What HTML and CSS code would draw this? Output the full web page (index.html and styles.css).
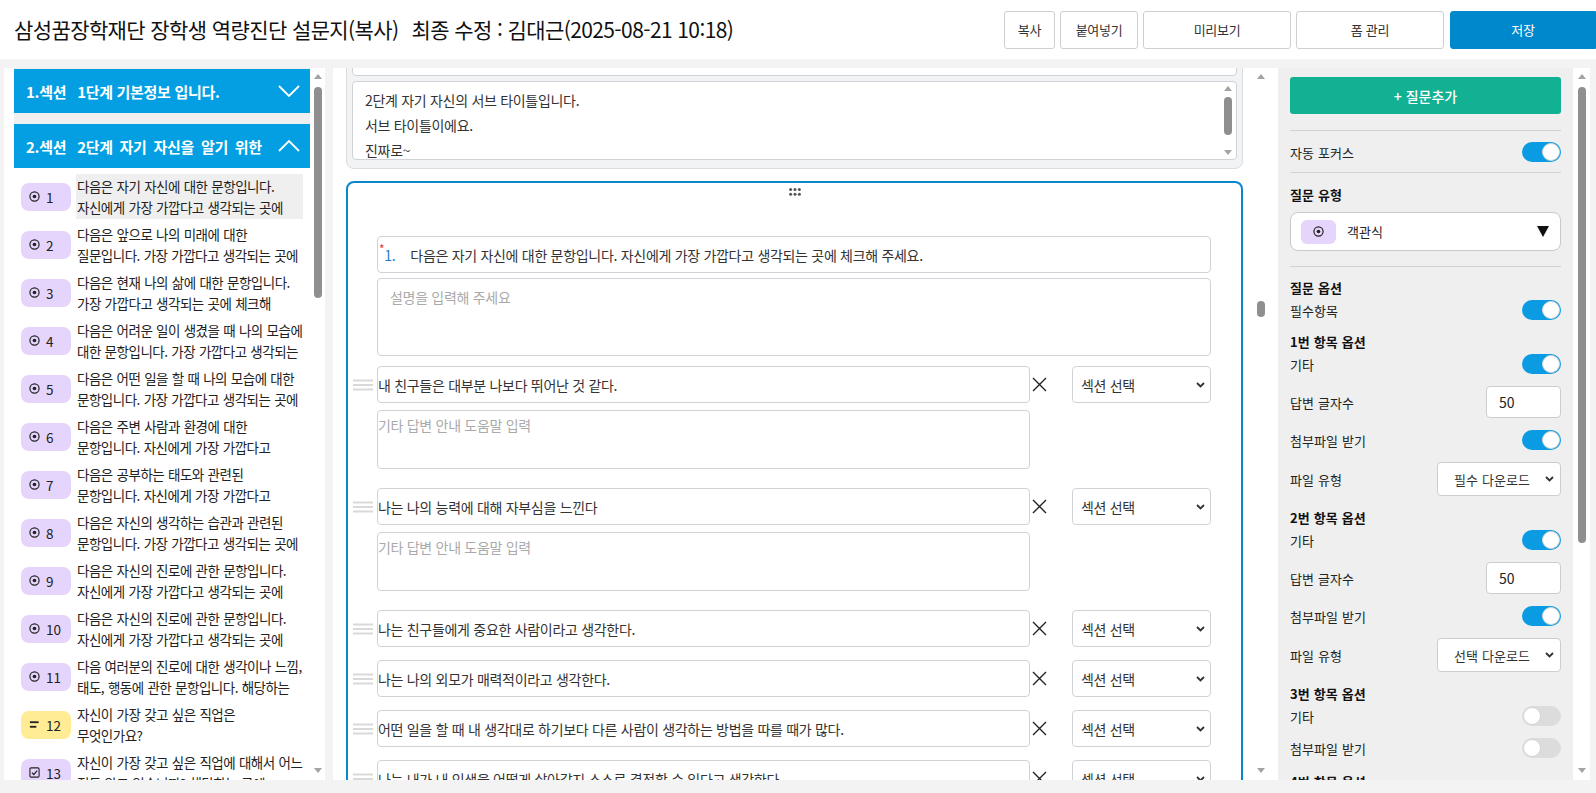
FILE: index.html
```html
<!DOCTYPE html>
<html lang="ko">
<head>
<meta charset="utf-8">
<title>설문지 편집</title>
<link rel="stylesheet" href="styles.css">
</head>
<body>
<header class="topbar">
  <h1 class="doc-title">삼성꿈장학재단 장학생 역량진단 설문지(복사)<span class="modified">최종 수정 : 김대근(2025-08-21 10:18)</span></h1>
  <div class="top-actions">
    <button class="btn btn-sm">복사</button>
    <button class="btn btn-md">붙여넣기</button>
    <button class="btn btn-lg">미리보기</button>
    <button class="btn btn-lg">폼 관리</button>
    <button class="btn btn-primary">저장</button>
  </div>
</header>

<main class="workspace">
  <!-- LEFT OUTLINE -->
  <aside class="outline">
    <div class="outline-list">
      <section class="sec">
        <div class="sec-head">
          <span class="sec-no">1.섹션</span>
          <span class="sec-name">1단계 기본정보 입니다.</span>
          <svg class="chev" viewBox="0 0 22 12"><polyline points="1,1 11,11 21,1" fill="none" stroke="#fff" stroke-width="1.8"/></svg>
        </div>
      </section>
      <section class="sec open">
        <div class="sec-head">
          <span class="sec-no">2.섹션</span>
          <span class="sec-name wide-words">2단계 자기 자신을 알기 위한</span>
          <svg class="chev" viewBox="0 0 22 12"><polyline points="1,11 11,1 21,11" fill="none" stroke="#fff" stroke-width="1.8"/></svg>
        </div>
        <ul class="q-list">
          <li class="q-item active"><span class="q-badge"><svg class="ico" viewBox="0 0 12 12"><circle cx="6" cy="6" r="5" fill="none" stroke="#222" stroke-width="1.3"/><circle cx="6" cy="6" r="2" fill="#222"/></svg>1</span><p class="q-text">다음은 자기 자신에 대한 문항입니다.<br>자신에게 가장 가깝다고 생각되는 곳에</p></li>
          <li class="q-item"><span class="q-badge"><svg class="ico" viewBox="0 0 12 12"><circle cx="6" cy="6" r="5" fill="none" stroke="#222" stroke-width="1.3"/><circle cx="6" cy="6" r="2" fill="#222"/></svg>2</span><p class="q-text">다음은 앞으로 나의 미래에 대한<br>질문입니다. 가장 가깝다고 생각되는 곳에</p></li>
          <li class="q-item"><span class="q-badge"><svg class="ico" viewBox="0 0 12 12"><circle cx="6" cy="6" r="5" fill="none" stroke="#222" stroke-width="1.3"/><circle cx="6" cy="6" r="2" fill="#222"/></svg>3</span><p class="q-text">다음은 현재 나의 삶에 대한 문항입니다.<br>가장 가깝다고 생각되는 곳에 체크해</p></li>
          <li class="q-item"><span class="q-badge"><svg class="ico" viewBox="0 0 12 12"><circle cx="6" cy="6" r="5" fill="none" stroke="#222" stroke-width="1.3"/><circle cx="6" cy="6" r="2" fill="#222"/></svg>4</span><p class="q-text">다음은 어려운 일이 생겼을 때 나의 모습에<br>대한 문항입니다. 가장 가깝다고 생각되는</p></li>
          <li class="q-item"><span class="q-badge"><svg class="ico" viewBox="0 0 12 12"><circle cx="6" cy="6" r="5" fill="none" stroke="#222" stroke-width="1.3"/><circle cx="6" cy="6" r="2" fill="#222"/></svg>5</span><p class="q-text">다음은 어떤 일을 할 때 나의 모습에 대한<br>문항입니다. 가장 가깝다고 생각되는 곳에</p></li>
          <li class="q-item"><span class="q-badge"><svg class="ico" viewBox="0 0 12 12"><circle cx="6" cy="6" r="5" fill="none" stroke="#222" stroke-width="1.3"/><circle cx="6" cy="6" r="2" fill="#222"/></svg>6</span><p class="q-text">다음은 주변 사람과 환경에 대한<br>문항입니다. 자신에게 가장 가깝다고</p></li>
          <li class="q-item"><span class="q-badge"><svg class="ico" viewBox="0 0 12 12"><circle cx="6" cy="6" r="5" fill="none" stroke="#222" stroke-width="1.3"/><circle cx="6" cy="6" r="2" fill="#222"/></svg>7</span><p class="q-text">다음은 공부하는 태도와 관련된<br>문항입니다. 자신에게 가장 가깝다고</p></li>
          <li class="q-item"><span class="q-badge"><svg class="ico" viewBox="0 0 12 12"><circle cx="6" cy="6" r="5" fill="none" stroke="#222" stroke-width="1.3"/><circle cx="6" cy="6" r="2" fill="#222"/></svg>8</span><p class="q-text">다음은 자신의 생각하는 습관과 관련된<br>문항입니다. 가장 가깝다고 생각되는 곳에</p></li>
          <li class="q-item"><span class="q-badge"><svg class="ico" viewBox="0 0 12 12"><circle cx="6" cy="6" r="5" fill="none" stroke="#222" stroke-width="1.3"/><circle cx="6" cy="6" r="2" fill="#222"/></svg>9</span><p class="q-text">다음은 자신의 진로에 관한 문항입니다.<br>자신에게 가장 가깝다고 생각되는 곳에</p></li>
          <li class="q-item"><span class="q-badge"><svg class="ico" viewBox="0 0 12 12"><circle cx="6" cy="6" r="5" fill="none" stroke="#222" stroke-width="1.3"/><circle cx="6" cy="6" r="2" fill="#222"/></svg>10</span><p class="q-text">다음은 자신의 진로에 관한 문항입니다.<br>자신에게 가장 가깝다고 생각되는 곳에</p></li>
          <li class="q-item"><span class="q-badge"><svg class="ico" viewBox="0 0 12 12"><circle cx="6" cy="6" r="5" fill="none" stroke="#222" stroke-width="1.3"/><circle cx="6" cy="6" r="2" fill="#222"/></svg>11</span><p class="q-text">다음 여러분의 진로에 대한 생각이나 느낌,<br>태도, 행동에 관한 문항입니다. 해당하는</p></li>
          <li class="q-item"><span class="q-badge short"><svg class="ico" viewBox="0 0 12 12"><rect x="1" y="2.5" width="9.5" height="2" fill="#222"/><rect x="1" y="7.5" width="7" height="2" fill="#222"/></svg>12</span><p class="q-text">자신이 가장 갖고 싶은 직업은<br>무엇인가요?</p></li>
          <li class="q-item"><span class="q-badge"><svg class="ico" viewBox="0 0 12 12"><rect x="1" y="1" width="10" height="10" rx="1.2" fill="none" stroke="#222" stroke-width="1.2"/><path d="M3.2 6.2l2 2 3.8-4.3" fill="none" stroke="#222" stroke-width="1.3"/></svg>13</span><p class="q-text">자신이 가장 갖고 싶은 직업에 대해서 어느<br>정도 알고 있습니까? 해당하는 곳에</p></li>
        </ul>
      </section>
    </div>
    <div class="vscroll vs-outline">
      <span class="vs-up"></span>
      <span class="vs-thumb"></span>
      <span class="vs-fill"></span>
      <span class="vs-down"></span>
    </div>
  </aside>

  <!-- MIDDLE EDITOR -->
  <section class="editor">
    <div class="editor-scroll">
      <div class="sub-card">
        <div class="sub-title-input"></div>
        <div class="sub-area">
          <div class="sub-lines">
            <p>2단계 자기 자신의 서브 타이틀입니다.</p>
            <p>서브 타이틀이에요.</p>
            <p>진짜로~</p>
          </div>
          <div class="vscroll vs-sub">
            <span class="vs-up"></span>
            <span class="vs-thumb"></span>
            <span class="vs-fill"></span>
            <span class="vs-down"></span>
          </div>
        </div>
      </div>

      <div class="q-card">
        <div class="drag-dots">
          <svg viewBox="0 0 12 8" width="12" height="8"><circle cx="1.6" cy="1.6" r="1.5" fill="#555"/><circle cx="6" cy="1.6" r="1.5" fill="#555"/><circle cx="10.4" cy="1.6" r="1.5" fill="#555"/><circle cx="1.6" cy="6.2" r="1.5" fill="#555"/><circle cx="6" cy="6.2" r="1.5" fill="#555"/><circle cx="10.4" cy="6.2" r="1.5" fill="#555"/></svg>
        </div>
        <div class="q-title">
          <span class="req">*</span><span class="q-num">1.</span><span class="q-title-text">다음은 자기 자신에 대한 문항입니다. 자신에게 가장 가깝다고 생각되는 곳에 체크해 주세요.</span>
        </div>
        <div class="q-desc">설명을 입력해 주세요</div>

        <div class="opt has-help">
          <span class="opt-handle"><svg viewBox="0 0 20 12" width="20" height="12"><path d="M0 1.5h20M0 6h20M0 10.5h20" stroke="#d9d9d9" stroke-width="2"/></svg></span>
          <div class="opt-input">내 친구들은 대부분 나보다 뛰어난 것 같다.</div>
          <span class="opt-del"><svg viewBox="0 0 15 15" width="15" height="15"><path d="M1 1L14 14M14 1L1 14" stroke="#222" stroke-width="1.4"/></svg></span>
          <div class="opt-select"><span>섹션 선택</span><svg viewBox="0 0 9 6" width="9" height="6"><polyline points="1,1 4.5,4.5 8,1" fill="none" stroke="#333" stroke-width="1.8"/></svg></div>
          <div class="opt-help">기타 답변 안내 도움말 입력</div>
        </div>

        <div class="opt has-help">
          <span class="opt-handle"><svg viewBox="0 0 20 12" width="20" height="12"><path d="M0 1.5h20M0 6h20M0 10.5h20" stroke="#d9d9d9" stroke-width="2"/></svg></span>
          <div class="opt-input">나는 나의 능력에 대해 자부심을 느낀다</div>
          <span class="opt-del"><svg viewBox="0 0 15 15" width="15" height="15"><path d="M1 1L14 14M14 1L1 14" stroke="#222" stroke-width="1.4"/></svg></span>
          <div class="opt-select"><span>섹션 선택</span><svg viewBox="0 0 9 6" width="9" height="6"><polyline points="1,1 4.5,4.5 8,1" fill="none" stroke="#333" stroke-width="1.8"/></svg></div>
          <div class="opt-help">기타 답변 안내 도움말 입력</div>
        </div>

        <div class="opt">
          <span class="opt-handle"><svg viewBox="0 0 20 12" width="20" height="12"><path d="M0 1.5h20M0 6h20M0 10.5h20" stroke="#d9d9d9" stroke-width="2"/></svg></span>
          <div class="opt-input">나는 친구들에게 중요한 사람이라고 생각한다.</div>
          <span class="opt-del"><svg viewBox="0 0 15 15" width="15" height="15"><path d="M1 1L14 14M14 1L1 14" stroke="#222" stroke-width="1.4"/></svg></span>
          <div class="opt-select"><span>섹션 선택</span><svg viewBox="0 0 9 6" width="9" height="6"><polyline points="1,1 4.5,4.5 8,1" fill="none" stroke="#333" stroke-width="1.8"/></svg></div>
        </div>

        <div class="opt">
          <span class="opt-handle"><svg viewBox="0 0 20 12" width="20" height="12"><path d="M0 1.5h20M0 6h20M0 10.5h20" stroke="#d9d9d9" stroke-width="2"/></svg></span>
          <div class="opt-input">나는 나의 외모가 매력적이라고 생각한다.</div>
          <span class="opt-del"><svg viewBox="0 0 15 15" width="15" height="15"><path d="M1 1L14 14M14 1L1 14" stroke="#222" stroke-width="1.4"/></svg></span>
          <div class="opt-select"><span>섹션 선택</span><svg viewBox="0 0 9 6" width="9" height="6"><polyline points="1,1 4.5,4.5 8,1" fill="none" stroke="#333" stroke-width="1.8"/></svg></div>
        </div>

        <div class="opt">
          <span class="opt-handle"><svg viewBox="0 0 20 12" width="20" height="12"><path d="M0 1.5h20M0 6h20M0 10.5h20" stroke="#d9d9d9" stroke-width="2"/></svg></span>
          <div class="opt-input">어떤 일을 할 때 내 생각대로 하기보다 다른 사람이 생각하는 방법을 따를 때가 많다.</div>
          <span class="opt-del"><svg viewBox="0 0 15 15" width="15" height="15"><path d="M1 1L14 14M14 1L1 14" stroke="#222" stroke-width="1.4"/></svg></span>
          <div class="opt-select"><span>섹션 선택</span><svg viewBox="0 0 9 6" width="9" height="6"><polyline points="1,1 4.5,4.5 8,1" fill="none" stroke="#333" stroke-width="1.8"/></svg></div>
        </div>

        <div class="opt">
          <span class="opt-handle"><svg viewBox="0 0 20 12" width="20" height="12"><path d="M0 1.5h20M0 6h20M0 10.5h20" stroke="#d9d9d9" stroke-width="2"/></svg></span>
          <div class="opt-input">나는 내가 내 인생을 어떻게 살아갈지 스스로 결정할 수 있다고 생각한다.</div>
          <span class="opt-del"><svg viewBox="0 0 15 15" width="15" height="15"><path d="M1 1L14 14M14 1L1 14" stroke="#222" stroke-width="1.4"/></svg></span>
          <div class="opt-select"><span>섹션 선택</span><svg viewBox="0 0 9 6" width="9" height="6"><polyline points="1,1 4.5,4.5 8,1" fill="none" stroke="#333" stroke-width="1.8"/></svg></div>
        </div>
      </div>
    </div>
    <div class="vscroll vs-editor">
      <span class="vs-up"></span>
      <span class="vs-thumb"></span>
      <span class="vs-fill"></span>
      <span class="vs-down"></span>
    </div>
  </section>

  <!-- RIGHT INSPECTOR -->
  <aside class="inspector">
    <div class="inspector-body">
      <button class="add-q">+ 질문추가</button>
      <div class="divider"></div>
      <div class="opt-line focus-row"><span>자동 포커스</span><span class="toggle on"><span class="knob"></span></span></div>
      <div class="divider flush"></div>
      <div class="type-block">
        <h3 class="grp-title">질문 유형</h3>
        <div class="type-select">
          <span class="type-pill"><svg viewBox="0 0 12 12" width="11" height="11"><circle cx="6" cy="6" r="5" fill="none" stroke="#222" stroke-width="1.3"/><circle cx="6" cy="6" r="2" fill="#222"/></svg></span>
          <span class="type-name">객관식</span>
          <svg class="type-caret" viewBox="0 0 12 11" width="12" height="11"><polygon points="0,0 12,0 6,11" fill="#111"/></svg>
        </div>
      </div>
      <div class="divider wide"></div>

      <div class="options">
        <div class="opt-group">
          <h3 class="grp-title">질문 옵션</h3>
          <div class="opt-lines">
            <div class="opt-line"><span>필수항목</span><span class="toggle on"><span class="knob"></span></span></div>
          </div>
        </div>
        <div class="opt-group">
          <h3 class="grp-title">1번 항목 옵션</h3>
          <div class="opt-lines">
            <div class="opt-line"><span>기타</span><span class="toggle on"><span class="knob"></span></span></div>
            <div class="opt-line"><span>답변 글자수</span><span class="num-input">50</span></div>
            <div class="opt-line"><span>첨부파일 받기</span><span class="toggle on"><span class="knob"></span></span></div>
            <div class="opt-line"><span>파일 유형</span><span class="file-select"><span>필수 다운로드</span><svg viewBox="0 0 9 6" width="9" height="6"><polyline points="1,1 4.5,4.5 8,1" fill="none" stroke="#333" stroke-width="1.8"/></svg></span></div>
          </div>
        </div>
        <div class="opt-group">
          <h3 class="grp-title">2번 항목 옵션</h3>
          <div class="opt-lines">
            <div class="opt-line"><span>기타</span><span class="toggle on"><span class="knob"></span></span></div>
            <div class="opt-line"><span>답변 글자수</span><span class="num-input">50</span></div>
            <div class="opt-line"><span>첨부파일 받기</span><span class="toggle on"><span class="knob"></span></span></div>
            <div class="opt-line"><span>파일 유형</span><span class="file-select"><span>선택 다운로드</span><svg viewBox="0 0 9 6" width="9" height="6"><polyline points="1,1 4.5,4.5 8,1" fill="none" stroke="#333" stroke-width="1.8"/></svg></span></div>
          </div>
        </div>
        <div class="opt-group">
          <h3 class="grp-title">3번 항목 옵션</h3>
          <div class="opt-lines">
            <div class="opt-line"><span>기타</span><span class="toggle"><span class="knob"></span></span></div>
            <div class="opt-line"><span>첨부파일 받기</span><span class="toggle"><span class="knob"></span></span></div>
          </div>
        </div>
        <div class="opt-group last">
          <h3 class="grp-title">4번 항목 옵션</h3>
        </div>
      </div>
    </div>
    <div class="vscroll vs-inspector">
      <span class="vs-up"></span>
      <span class="vs-thumb"></span>
      <span class="vs-fill"></span>
      <span class="vs-down"></span>
    </div>
  </aside>
</main>
</body>
</html>
```

FILE: styles.css
```css
* { box-sizing: border-box; margin: 0; padding: 0; }
html, body { width: 1596px; height: 793px; overflow: hidden; }
body {
  font-family: "Noto Sans CJK KR", "Noto Sans", sans-serif;
  background: #f3f3f3;
  color: #222;
  font-size: 14px;
}

/* ---------- header ---------- */
.topbar {
  height: 59px;
  background: #fff;
  display: flex;
  align-items: center;
  justify-content: space-between;
  padding-left: 14px;
}
.doc-title {
  font-size: 21px;
  font-weight: 400;
  letter-spacing: -0.6px;
  color: #111;
  line-height: 1;
}
.doc-title .modified { margin-left: 13px; }
.top-actions { display: flex; align-items: center; gap: 5px; }
.btn {
  height: 38px;
  border: 1px solid #cfcfcf;
  border-radius: 3px;
  background: #fff;
  font-family: inherit;
  font-size: 13px;
  letter-spacing: -0.3px;
  color: #333;
}
.btn-sm { width: 51px; }
.btn-md { width: 78px; }
.btn-lg { width: 148px; }
.btn-primary {
  width: 146px;
  margin-left: 1px;
  background: #0088cc;
  border-color: #0088cc;
  color: #fff;
  border-radius: 3px 0 0 3px;
}

/* ---------- workspace ---------- */
.workspace {
  display: flex;
  height: 734px;
  padding: 9px 0 13px;
}

/* fake scrollbars */
.vscroll {
  display: flex;
  flex-direction: column;
  align-items: center;
  padding: 6px 0 7px;
}
.vs-up, .vs-down { width: 0; height: 0; border-left: 4px solid transparent; border-right: 4px solid transparent; }
.vs-up { border-bottom: 5px solid #a3a3a3; }
.vs-down { border-top: 5px solid #a3a3a3; }
.vs-thumb { width: 8px; border-radius: 4px; background: #8f8f8f; margin-top: 8px; }
.vs-fill { flex: 1; }

/* ---------- left outline ---------- */
.outline {
  width: 321px;
  margin-left: 4px;
  background: #fff;
  display: flex;
}
.outline-list {
  width: 296px;
  margin-left: 10px;
  background: #efefef;
  padding-top: 1px;
  overflow: hidden;
  display: flex;
  flex-direction: column;
  gap: 11px;
}
.sec-head {
  height: 44px;
  background: #049fe3;
  color: #fff;
  display: flex;
  align-items: center;
  padding: 0 10px 0 12px;
  font-size: 15px;
  font-weight: 700;
  letter-spacing: -0.3px;
}
.sec-no { margin-right: 11px; white-space: nowrap; }
.sec-name { flex: 1; white-space: nowrap; overflow: hidden; }
.sec-name.wide-words { word-spacing: 3px; }
.chev { width: 22px; height: 12px; flex: none; }
.q-list { list-style: none; background: #fff; padding: 6px 7px 0; }
.q-item {
  display: flex;
  align-items: center;
  gap: 5px;
  height: 45px;
  margin-bottom: 3px;
}
.q-badge {
  flex: none;
  width: 50px;
  height: 28px;
  border-radius: 8px;
  background: #e5d5fc;
  display: flex;
  align-items: center;
  gap: 6px;
  padding-left: 8px;
  font-size: 13.5px;
  color: #222;
}
.q-badge.short { background: #ffec94; }
.ico { width: 11px; height: 11px; flex: none; }
.q-text {
  width: 227px;
  height: 45px;
  padding: 2px 0 0 1px;
  line-height: 21px;
  font-size: 13.5px;
  letter-spacing: -0.5px;
  word-spacing: 0.5px;
  white-space: nowrap;
  overflow: hidden;
  color: #222;
}
.q-item.active .q-text { background: #efefef; }
.vs-outline { width: 9px; margin-left: 3px; }
.vs-outline .vs-thumb { height: 211px; }

/* ---------- middle editor ---------- */
.editor {
  width: 945px;
  margin-left: 8px;
  background: #fff;
  display: flex;
}
.editor-scroll {
  width: 922px;
  padding: 0 12px 0 13px;
  overflow: hidden;
  font-size: 14px;
  letter-spacing: -0.3px;
  color: #333;
}
.vs-editor { width: 11px; }
.vs-editor .vs-thumb { margin-top: 222px; height: 16px; }

.sub-card {
  margin-top: -30px;
  background: #f2f3f5;
  border: 1px solid #dadce0;
  border-radius: 8px;
  padding: 5px 5px 8px;
}
.sub-title-input {
  height: 32px;
  background: #fff;
  border: 1px solid #cfd3d8;
  border-radius: 4px;
}
.sub-area {
  margin-top: 5px;
  height: 79px;
  background: #fff;
  border: 1px solid #cfd3d8;
  border-radius: 4px;
  display: flex;
  overflow: hidden;
}
.sub-lines {
  flex: 1;
  padding: 6px 0 0 12px;
  line-height: 25px;
}
.vs-sub { width: 9px; margin-right: 4px; padding: 4px 0 4px; }
.vs-sub .vs-thumb { margin-top: 6px; height: 38px; }

.q-card {
  margin-top: 12px;
  border: 2px solid #0a86cd;
  border-radius: 8px;
  padding: 5px 30px 40px 5px;
  background: #fff;
}
.drag-dots { display: flex; justify-content: center; margin-left: 25px; height: 8px; }
.drag-dots svg { display: block; }
.q-title {
  margin: 40px 0 0 24px;
  height: 37px;
  border: 1px solid #cfd3d8;
  border-radius: 4px;
  display: flex;
  align-items: center;
  padding-left: 1px;
  white-space: nowrap;
}
.req { color: #e53935; font-size: 12px; line-height: 12px; align-self: flex-start; margin-top: 6px; }
.q-num { color: #1e7fd0; width: 26px; flex: none; }
.q-desc {
  margin: 5px 0 0 24px;
  height: 78px;
  border: 1px solid #cfd3d8;
  border-radius: 4px;
  padding: 8px 12px;
  line-height: 20px;
  color: #aaa;
}
.opt {
  display: grid;
  grid-template-columns: 24px 653px 42px 139px;
  row-gap: 7px;
  align-items: center;
  margin-top: 13px;
}
.q-desc + .opt { margin-top: 10px; }
.opt.has-help + .opt { margin-top: 19px; }
.opt-handle { display: flex; }
.opt-handle svg { display: block; }
.opt-input {
  height: 37px;
  border: 1px solid #cfd3d8;
  border-radius: 4px;
  display: flex;
  align-items: center;
  white-space: nowrap;
  overflow: hidden;
}
.opt-del { display: flex; padding-left: 2px; }
.opt-del svg { display: block; }
.opt-select {
  height: 37px;
  border: 1px solid #cfd3d8;
  border-radius: 4px;
  display: flex;
  align-items: center;
  justify-content: space-between;
  padding: 0 5px 0 8px;
  color: #333;
}
.opt-help {
  grid-column: 2;
  height: 59px;
  border: 1px solid #cfd3d8;
  border-radius: 4px;
  padding: 4px 0 0 0;
  line-height: 20px;
  color: #aaa;
}

/* ---------- right inspector ---------- */
.inspector { width: 312px; display: flex; }
.inspector-body {
  width: 295px;
  background: #efefef;
  padding: 9px 12px 0;
  overflow: hidden;
  font-size: 13px;
  letter-spacing: 0;
  word-spacing: 0.5px;
  color: #222;
}
.vs-inspector { width: 17px; background: #fff; }
.vs-inspector .vs-thumb { height: 456px; }

.add-q {
  display: block;
  width: 100%;
  height: 37px;
  background: #13b193;
  color: #fff;
  border: 0;
  border-radius: 3px;
  font-family: inherit;
  font-size: 14px;
  font-weight: 500;
  letter-spacing: 0;
}
.divider { height: 1px; background: #d2d2d2; margin-top: 16px; }
.divider.flush { margin-top: 0; }
.divider.wide { margin-top: 15px; }
.focus-row { padding: 11px 0 10px; }
.type-block { padding-top: 11px; }
.grp-title { font-size: 13px; font-weight: 700; line-height: 22px; color: #111; }
.type-select {
  margin-top: 6px;
  height: 39px;
  background: #fff;
  border: 1px solid #c9c9c9;
  border-radius: 8px;
  display: flex;
  align-items: center;
  padding: 0 11px 0 10px;
}
.type-pill {
  width: 35px;
  height: 24px;
  border-radius: 6px;
  background: #e5d5fc;
  display: flex;
  align-items: center;
  justify-content: center;
}
.type-name { margin-left: 11px; flex: 1; }
.type-caret { display: block; }

.options { padding-top: 10px; }
.opt-group + .opt-group { margin-top: 11px; }
.opt-group.last { margin-top: 13px; }
.opt-lines { display: flex; flex-direction: column; gap: 12px; margin-top: 1px; }
.opt-line {
  display: flex;
  align-items: center;
  justify-content: space-between;
  min-height: 20px;
}
.toggle {
  width: 39px;
  height: 20px;
  border-radius: 10px;
  background: #dcdcdc;
  display: flex;
  align-items: center;
  justify-content: flex-start;
  padding: 0 1px;
}
.toggle.on { background: #0a9be3; justify-content: flex-end; }
.knob {
  width: 18px;
  height: 18px;
  border-radius: 50%;
  background: #fff;
  border: 1px solid #d4d4d4;
}
.num-input {
  width: 75px;
  height: 32px;
  background: #fff;
  border: 1px solid #cdcdcd;
  border-radius: 4px;
  display: flex;
  align-items: center;
  padding-left: 12px;
  font-size: 14px;
}
.file-select {
  width: 124px;
  height: 34px;
  background: #fff;
  border: 1px solid #cdcdcd;
  border-radius: 4px;
  display: flex;
  align-items: center;
  justify-content: space-between;
  padding: 0 6px 0 16px;
  color: #333;
}
```
